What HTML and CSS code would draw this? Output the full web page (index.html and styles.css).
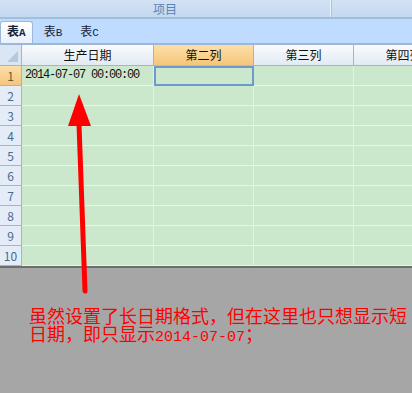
FILE: index.html
```html
<!DOCTYPE html>
<html lang="zh">
<head>
<meta charset="utf-8">
<link rel="stylesheet" href="styles.css">
</head>
<body>
<div class="app">
  <div class="topbar">
    <div class="topcell main">项目</div>
    <div class="topcell rest"></div>
  </div>
  <div class="tabstrip">
    <div class="tab active">表<span class="lat">A</span></div>
    <div class="tab">表<span class="lat">B</span></div>
    <div class="tab">表<span class="lat">C</span></div>
  </div>
  <div class="sheetwrap">
  <div class="sheet">
    <div class="corner"><span class="tri"></span></div>
    <div class="colhead">生产日期</div>
    <div class="colhead sel">第二列</div>
    <div class="colhead">第三列</div>
    <div class="colhead">第四列</div>

    <div class="rowhead sel">1</div><div class="cell date">2014-07-07 00:00:00</div><div class="cell active"></div><div class="cell"></div><div class="cell"></div>
    <div class="rowhead">2</div><div class="cell"></div><div class="cell"></div><div class="cell"></div><div class="cell"></div>
    <div class="rowhead">3</div><div class="cell"></div><div class="cell"></div><div class="cell"></div><div class="cell"></div>
    <div class="rowhead">4</div><div class="cell"></div><div class="cell"></div><div class="cell"></div><div class="cell"></div>
    <div class="rowhead">5</div><div class="cell"></div><div class="cell"></div><div class="cell"></div><div class="cell"></div>
    <div class="rowhead">6</div><div class="cell"></div><div class="cell"></div><div class="cell"></div><div class="cell"></div>
    <div class="rowhead">7</div><div class="cell"></div><div class="cell"></div><div class="cell"></div><div class="cell"></div>
    <div class="rowhead">8</div><div class="cell"></div><div class="cell"></div><div class="cell"></div><div class="cell"></div>
    <div class="rowhead">9</div><div class="cell"></div><div class="cell"></div><div class="cell"></div><div class="cell"></div>
    <div class="rowhead">10</div><div class="cell"></div><div class="cell"></div><div class="cell"></div><div class="cell"></div>
  </div>
  </div>
  <div class="note">虽然设置了长日期格式，但在这里也只想显示短日期，即只显示<span class="num">2014-07-07</span>；</div>
  <svg class="arrow" width="412" height="393" viewBox="0 0 412 393">
    <polygon points="79,94 68,126 91,126" fill="#ff0000"/>
    <line x1="79" y1="124" x2="85" y2="291" stroke="#ff0000" stroke-width="5" stroke-linecap="round"/>
  </svg>
</div>
</body>
</html>
```
FILE: styles.css
```css
html, body {
  margin: 0;
  padding: 0;
}
body {
  width: 412px;
  height: 393px;
  overflow: hidden;
  background: #a6a6a6;
  font-family: "Noto Sans CJK SC", "DejaVu Sans", sans-serif;
}
.app {
  position: relative;
  width: 412px;
  height: 393px;
}
.topbar {
  display: flex;
  height: 17px;
  background: linear-gradient(#d3e2f4, #c4d8ef);
  border-bottom: 2px solid #9fbfdf;
}
.topcell {
  font-size: 12px;
  line-height: 17px;
  color: #5b83b5;
  text-align: center;
}
.topcell.main {
  width: 330px;
  border-right: 1px solid #eaf2fb;
}
.topcell.rest {
  flex: 1;
  border-left: 1px solid #a9c4e2;
}
.tabstrip {
  display: flex;
  align-items: flex-end;
  height: 26px;
  background: #bfdbff;
  border-bottom: 2px solid #9db7d7;
  box-sizing: border-box;
}
.tab {
  font-size: 12px;
  line-height: 18px;
  padding: 0 9px 1px 9px;
  color: #15233a;
}
.tab.active {
  font-weight: bold;
  background: linear-gradient(#ffffff, #e9f1fc);
  border: 1px solid #9db7d7;
  border-bottom: none;
  border-radius: 3px 3px 0 0;
  padding: 0 6px 1px 6px;
  margin-right: 2px;
}
.lat {
  font-family: "Liberation Mono", monospace;
  font-size: 11px;
}
.sheetwrap {
  width: 412px;
  overflow: hidden;
  border-bottom: 2px solid #6e6e6e;
}
.sheet {
  display: grid;
  grid-template-columns: 22px 132px 100px 100px 100px;
  grid-template-rows: 21px repeat(10, 20px);
  width: 454px;
  background: #cce8cc;
}
.corner {
  position: relative;
  background: #dbe6f4;
  border-right: 1px solid #9eb6ce;
  border-bottom: 1px solid #9eb6ce;
  box-sizing: border-box;
}
.tri {
  position: absolute;
  right: 3px;
  bottom: 3px;
  width: 0;
  height: 0;
  border-left: 11px solid transparent;
  border-bottom: 11px solid #b5c8de;
}
.colhead {
  font-size: 12px;
  line-height: 20px;
  text-align: center;
  color: #111;
  background: linear-gradient(#f9fbfd, #e3eaf4);
  border-right: 1px solid #9eb6ce;
  border-bottom: 1px solid #9eb6ce;
  box-sizing: border-box;
  white-space: nowrap;
  overflow: hidden;
}
.colhead.sel {
  background: linear-gradient(#fbe0a9, #f5c57a);
  border-bottom-color: #f0b35a;
}
.rowhead {
  font-size: 12px;
  line-height: 19px;
  text-align: center;
  color: #4a6a90;
  background: #e4ecf7;
  border-right: 1px solid #9eb6ce;
  border-bottom: 1px solid #9eb6ce;
  box-sizing: border-box;
}
.rowhead.sel {
  background: linear-gradient(#fbe0a9, #f5c57a);
  color: #6a5a40;
}
.cell {
  border-right: 1px solid #e4f1e4;
  border-bottom: 1px solid #eaf4ea;
  box-sizing: border-box;
}
.cell.date {
  font-family: "Liberation Mono", monospace;
  font-size: 12px;
  letter-spacing: -1.2px;
  line-height: 19px;
  padding-left: 3px;
  color: #111;
  white-space: nowrap;
}
.cell.active {
  border: 2px solid #6a9ad0;
}
.note {
  margin: 38px 0 0 29px;
  width: 382px;
  font-family: "Noto Sans CJK SC", sans-serif;
  font-size: 18px;
  line-height: 18px;
  color: #ff0000;
}
.num {
  font-family: "Liberation Mono", monospace;
  font-size: 15px;
}
.arrow {
  position: absolute;
  left: 0;
  top: 0;
  pointer-events: none;
}
```
